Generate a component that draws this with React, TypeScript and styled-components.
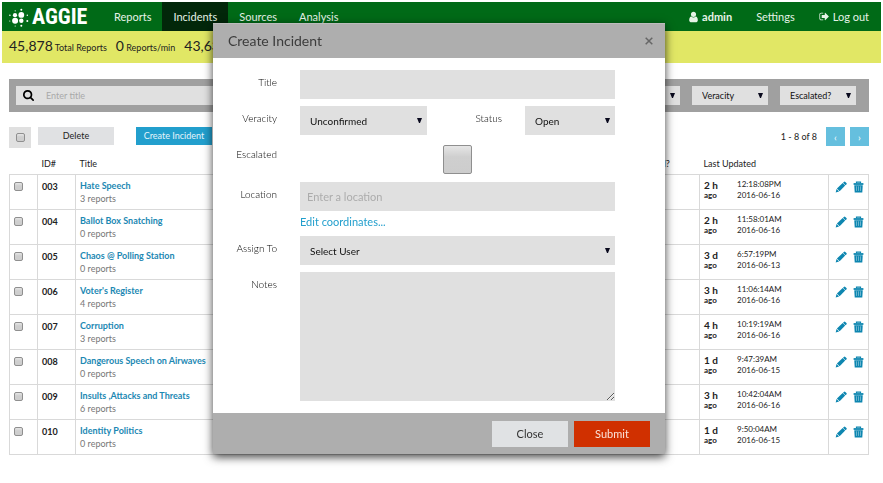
import React from "react";
import styled, { createGlobalStyle } from "styled-components";

const GlobalStyle = createGlobalStyle`
  *, *::before, *::after { box-sizing: border-box; }
  body {
    margin: 0;
    background: #fff;
    color: #222;
    font: 400 10px/12px Lato, "Open Sans", sans-serif;
  }
  button, input, select, textarea { font: inherit; color: inherit; border: 0; border-radius: 0; margin: 0; }
  a { text-decoration: none; }
`;

const Page = styled.div`
  padding: 2px 2px 0;
`;

/* ---------- navigation ---------- */

const NavBar = styled.nav`
  display: flex;
  height: 29px;
  padding: 0 12px 0 7px;
  background: #006a17;
`;

const Brand = styled.a`
  display: flex;
  align-items: center;
  gap: 3px;
  width: 94px;
  color: #fff;
`;

const BrandName = styled.span`
  font: 700 22px/29px "Liberation Sans Narrow", "Roboto Condensed", "Open Sans Condensed", sans-serif;
`;

const NavLink = styled.a<{ $active?: boolean }>`
  display: flex;
  align-items: center;
  gap: 4px;
  padding: 0 11px;
  font-size: 11px;
  color: #e6f3e7;
  background: ${(p) => (p.$active ? "#02270a" : "transparent")};
`;

const NavEnd = styled.div`
  display: flex;
  gap: 2px;
  margin-left: auto;
  margin-right: -11px;
`;

const StatsBar = styled.div`
  display: flex;
  align-items: center;
  gap: 9px;
  height: 32px;
  padding: 0 7px;
  background: #e1e765;
  white-space: nowrap;
`;

const Stat = styled.span`
  font-size: 9px;
`;

const StatValue = styled.span`
  font-size: 14px;
`;

/* ---------- incident list ---------- */

const Content = styled.main`
  padding: 16px 12px 0 7px;
`;

const FilterBar = styled.form`
  display: flex;
  align-items: center;
  gap: 12px;
  height: 33px;
  padding: 0 13px 0 7px;
  background: #a0a0a0;
`;

const SearchBox = styled.label`
  display: flex;
  align-items: center;
  flex: 1;
  gap: 12px;
  height: 19px;
  padding-left: 7px;
  background: #e0e0e0;
`;

const SearchInput = styled.input`
  flex: 1;
  min-width: 0;
  padding: 0;
  background: transparent;
  font-size: 9px;
  &::placeholder { color: #a9a9a9; }
`;

const SelectBox = styled.span<{ $width?: number; $tall?: boolean }>`
  display: grid;
  align-items: center;
  flex: ${(p) => (p.$width ? "none" : "1")};
  width: ${(p) => (p.$width ? `${p.$width}px` : "auto")};
  height: ${(p) => (p.$tall ? 29 : 19)}px;
  background: #e0e0e0;
  font-size: ${(p) => (p.$tall ? 10 : 9)}px;
  & > * { grid-area: 1 / 1; }
  & > svg { justify-self: end; margin-right: 5px; pointer-events: none; }
`;

const SelectControl = styled.select`
  appearance: none;
  width: 100%;
  height: 100%;
  padding: 0 16px 0 10px;
  background: transparent;
  color: #111;
`;

const Toolbar = styled.div`
  display: flex;
  align-items: flex-start;
  height: 27px;
  margin-top: 15px;
`;

const CheckAll = styled.label`
  display: grid;
  place-items: center;
  width: 22px;
  height: 21px;
  margin-right: 7px;
  background: #e0e0e0;
`;

const Checkbox = styled.input<{ $large?: boolean }>`
  appearance: none;
  display: block;
  width: ${(p) => (p.$large ? 29 : 9)}px;
  height: ${(p) => (p.$large ? 29 : 9)}px;
  border: 1px solid #8f8f8f;
  border-radius: 2px;
  background: linear-gradient(#e6e6e6, #cfcfcf 40%, #cdcdcd);
`;

const ToolButton = styled.button<{ $primary?: boolean }>`
  width: 76px;
  height: 18px;
  padding: 0;
  margin-right: 22px;
  font-size: 9px;
  background: ${(p) => (p.$primary ? "#229fcd" : "#e0e1e3")};
  color: ${(p) => (p.$primary ? "#e6f5fb" : "#222")};
`;

const Pager = styled.div`
  display: flex;
  align-items: center;
  gap: 5px;
  margin-left: auto;
`;

const PageRange = styled.span`
  margin-right: 4px;
  font-size: 9px;
`;

const PageButton = styled.button`
  width: 19px;
  height: 19px;
  padding: 0;
  background: #65bfde;
  color: #fff;
`;

const Table = styled.table`
  width: 100%;
  border-collapse: collapse;
  table-layout: fixed;
`;

const HeadCell = styled.th<{ $width?: number }>`
  width: ${(p) => (p.$width ? `${p.$width}px` : "auto")};
  height: 20px;
  padding: 0 4px;
  font-weight: 400;
  font-size: 9px;
  text-align: left;
`;

const Row = styled.tr`
  height: 35px;
  border: 1px solid #d9d9d9;
`;

const Cell = styled.td<{ $ruled?: boolean }>`
  padding: 5px 4px 0;
  vertical-align: top;
  border-left: ${(p) => (p.$ruled ? "1px solid #d9d9d9" : "0")};
`;

const CheckCell = styled(Cell)`
  padding-top: 7px;
`;

const UpdatedCell = styled(Cell)`
  padding-top: 4px;
`;

const IdText = styled.strong`
  font-size: 9px;
`;

const TitleLink = styled.a`
  display: block;
  font-size: 9px;
  font-weight: 700;
  color: #1c88b3;
`;

const ReportCount = styled.span`
  font-size: 9px;
  color: #777;
`;

const Updated = styled.div`
  display: grid;
  grid-template-columns: 33px 1fr;
`;

const Age = styled.strong`
  font-size: 10px;
  line-height: 12px;
`;

const AgeSuffix = styled.span`
  display: block;
  font-size: 8px;
  line-height: 9px;
`;

const Stamp = styled.span`
  font-size: 8px;
  line-height: 11px;
`;

const Actions = styled.div`
  display: flex;
  gap: 6px;
  padding: 1px 2px;
`;

const IconButton = styled.button`
  display: grid;
  flex: none;
  padding: 0;
  background: none;
  color: #0d86b0;
`;

/* ---------- dialog ---------- */

const Overlay = styled.div`
  position: fixed;
  inset: 0;
  display: flex;
  justify-content: center;
  align-items: flex-start;
  padding: 23px 5px 0 0;
`;

const Dialog = styled.section`
  width: 452px;
  background: #fff;
  box-shadow: 0 3px 9px rgba(0, 0, 0, 0.75);
`;

const DialogHeader = styled.header`
  display: flex;
  align-items: center;
  justify-content: space-between;
  height: 35px;
  padding: 0 12px 0 15px;
  border-top: 1px solid #bcbcbc;
  background: #aeaeae;
`;

const DialogTitle = styled.h2`
  margin: 0;
  font-size: 14px;
  font-weight: 400;
  line-height: 20px;
  color: #3c3c3c;
`;

const CloseIcon = styled.button`
  display: grid;
  padding: 0;
  background: none;
  color: #666;
`;

const DialogBody = styled.div`
  display: grid;
  gap: 7px;
  padding: 12px 50px 12px 15px;
`;

const Field = styled.div`
  display: flex;
  align-items: flex-start;
`;

const FieldLabel = styled.label<{ $inline?: boolean }>`
  flex: none;
  width: ${(p) => (p.$inline ? 75 : 49)}px;
  margin-right: 23px;
  font-size: 10px;
  font-weight: 300;
  line-height: 24px;
  text-align: right;
  color: #000;
`;

const FieldControl = styled.div<{ $centered?: boolean }>`
  display: flex;
  flex: 1;
  flex-direction: column;
  align-items: ${(p) => (p.$centered ? "center" : "stretch")};
  padding: ${(p) => (p.$centered ? "3px 0 1px" : "0")};
`;

const TextInput = styled.input`
  height: 29px;
  padding: 0 7px;
  background: #e0e0e0;
  font-size: 11px;
  &::placeholder { color: #acacac; }
`;

const CoordinatesLink = styled.a`
  align-self: flex-start;
  margin-top: 3px;
  font-size: 11px;
  line-height: 15px;
  color: #229fcd;
`;

const Notes = styled.textarea`
  display: block;
  height: 129px;
  padding: 7px;
  background: #e0e0e0;
  font-size: 11px;
  resize: vertical;
`;

const DialogFooter = styled.footer`
  display: flex;
  justify-content: flex-end;
  gap: 6px;
  padding: 8px 15px 7px;
  background: #aeaeae;
`;

const DialogButton = styled.button<{ $submit?: boolean }>`
  width: 76px;
  height: 26px;
  padding: 0;
  font-size: 11px;
  background: ${(p) => (p.$submit ? "#d03000" : "#e0e2e4")};
  color: ${(p) => (p.$submit ? "#fbe3da" : "#333")};
`;

/* ---------- icons ---------- */

const LogoMark = () => (
  <svg width="20" height="20" viewBox="0 -1 20 20" fill="currentColor" aria-hidden="true">
    <circle cx="6" cy="7.2" r="2.1" />
    <circle cx="12.3" cy="6.9" r="2.9" />
    <circle cx="6.1" cy="12.8" r="3" />
    <circle cx="12.3" cy="12.8" r="2.2" />
    <circle cx="12.3" cy="1.8" r="1" />
    <circle cx="6.2" cy="2.8" r=".6" />
    <circle cx=".9" cy="7.2" r=".8" />
    <circle cx=".8" cy="13" r=".6" />
    <circle cx="18.3" cy="7.2" r=".7" />
    <circle cx="18.3" cy="13" r="1" />
    <circle cx="12.3" cy="17.8" r="1" />
    <circle cx="6.2" cy="18" r=".6" />
  </svg>
);

const UserIcon = () => (
  <svg width="9" height="12" viewBox="0 0 1280 1792" fill="currentColor" aria-hidden="true">
    <path d="M1280 1399q0 109-62.5 187t-150.5 78h-854q-88 0-150.5-78t-62.5-187q0-85 8.5-160.5t31.5-152 58.5-131 94-89 134.5-34.5q131 128 313 128t313-128q76 0 134.5 34.5t94 89 58.5 131 31.5 152 8.5 160.5zm-256-887q0 159-112.5 271.5t-271.5 112.5-271.5-112.5-112.5-271.5 112.5-271.5 271.5-112.5 271.5 112.5 112.5 271.5z" />
  </svg>
);

const SignOutIcon = () => (
  <svg width="10" height="11" viewBox="0 0 1664 1792" fill="currentColor" aria-hidden="true">
    <path d="M704 1440q0 4 1 20t.5 26.5-3 23.5-10 19.5-20.5 6.5h-320q-119 0-203.5-84.5t-84.5-203.5v-704q0-119 84.5-203.5t203.5-84.5h320q13 0 22.5 9.5t9.5 22.5q0 4 1 20t.5 26.5-3 23.5-10 19.5-20.5 6.5h-320q-66 0-113 47t-47 113v704q0 66 47 113t113 47h312l11.5 1 11.5 3 8 5.5 7 9 2 13.5zm928-544q0 26-19 45l-544 544q-19 19-45 19t-45-19-19-45v-288h-448q-26 0-45-19t-19-45v-384q0-26 19-45t45-19h448v-288q0-26 19-45t45-19 45 19l544 544q19 19 19 45z" />
  </svg>
);

const SearchIcon = () => (
  <svg width="11" height="11" viewBox="64 128 1664 1664" fill="#000" aria-hidden="true">
    <path d="M1216 832q0-185-131.5-316.5t-316.5-131.5-316.5 131.5-131.5 316.5 131.5 316.5 316.5 131.5 316.5-131.5 131.5-316.5zm512 832q0 52-38 90t-90 38q-54 0-90-38l-343-342q-179 124-399 124-143 0-273.5-55.5t-225-150-150-225-55.5-273.5 55.5-273.5 150-225 225-150 273.5-55.5 273.5 55.5 225 150 150 225 55.5 273.5q0 220-124 399l343 343q37 37 37 90z" />
  </svg>
);

const PencilIcon = () => (
  <svg width="12" height="12" viewBox="0 0 12 12" fill="currentColor" aria-hidden="true">
    <path d="M8.9.9a1 1 0 0 1 1.4 0l1.1 1.1a1 1 0 0 1 0 1.4l-.9.9-2.5-2.5z" />
    <path d="M7.7 2.1l2.5 2.5-5.6 5.7-2.7-2.7z" />
    <path d="M1.5 8l2.6 2.6-3.4.8z" />
  </svg>
);

const TrashIcon = () => (
  <svg width="11" height="12" viewBox="0 0 11 12" aria-hidden="true">
    <path d="M3.5 2.3V1.1h4v1.2" fill="none" stroke="currentColor" strokeWidth="1.2" />
    <path d="M.6 2.1h9.8v1.8H.6z" fill="currentColor" />
    <path d="M1.3 4.2h8.4l-.4 7.2H1.7z" fill="currentColor" />
    <path d="M3.5 5.3v4.6M5.5 5.3v4.6M7.5 5.3v4.6" stroke="#c4e3ee" strokeWidth=".5" />
  </svg>
);

const ArrowIcon = () => (
  <svg width="5" height="5" viewBox="0 0 5 5" fill="#0a0a1e" aria-hidden="true">
    <path d="M0 0h5L3 5H2z" />
  </svg>
);

const CrossIcon = () => (
  <svg width="8" height="8" viewBox="0 0 8 8" aria-hidden="true">
    <path d="M.7.7l6.6 6.6M7.3.7L.7 7.3" stroke="currentColor" strokeWidth="1.5" />
  </svg>
);

/* ---------- composition ---------- */

interface SelectProps {
  id?: string;
  label?: string;
  value: string;
  width?: number;
  tall?: boolean;
}

const Select = ({ id, label, value, width, tall }: SelectProps) => (
  <SelectBox $width={width} $tall={tall}>
    <SelectControl id={id} aria-label={label} defaultValue={value}>
      <option>{value}</option>
    </SelectControl>
    <ArrowIcon />
  </SelectBox>
);

const incidents = [
  { id: "003", title: "Hate Speech", reports: 3, age: "2 h", time: "12:18:08PM", date: "2016-06-16" },
  { id: "004", title: "Ballot Box Snatching", reports: 0, age: "2 h", time: "11:58:01AM", date: "2016-06-16" },
  { id: "005", title: "Chaos @ Polling Station", reports: 0, age: "3 d", time: "6:57:19PM", date: "2016-06-13" },
  { id: "006", title: "Voter's Register", reports: 4, age: "3 h", time: "11:06:14AM", date: "2016-06-16" },
  { id: "007", title: "Corruption", reports: 3, age: "4 h", time: "10:19:19AM", date: "2016-06-16" },
  { id: "008", title: "Dangerous Speech on Airwaves", reports: 0, age: "1 d", time: "9:47:39AM", date: "2016-06-15" },
  { id: "009", title: "Insults ,Attacks and Threats", reports: 6, age: "3 h", time: "10:42:04AM", date: "2016-06-16" },
  { id: "010", title: "Identity Politics", reports: 0, age: "1 d", time: "9:50:04AM", date: "2016-06-15" },
];

const CreateIncidentDialog = () => (
  <Overlay>
    <Dialog role="dialog" aria-labelledby="dialog-title">
      <DialogHeader>
        <DialogTitle id="dialog-title">Create Incident</DialogTitle>
        <CloseIcon type="button" aria-label="Dismiss"><CrossIcon /></CloseIcon>
      </DialogHeader>
      <DialogBody>
        <Field>
          <FieldLabel htmlFor="title">Title</FieldLabel>
          <FieldControl><TextInput id="title" type="text" /></FieldControl>
        </Field>
        <Field>
          <FieldLabel htmlFor="veracity">Veracity</FieldLabel>
          <Select id="veracity" value="Unconfirmed" tall />
          <FieldLabel htmlFor="status" $inline>Status</FieldLabel>
          <Select id="status" value="Open" width={90} tall />
        </Field>
        <Field>
          <FieldLabel htmlFor="escalated">Escalated</FieldLabel>
          <FieldControl $centered><Checkbox id="escalated" type="checkbox" $large /></FieldControl>
        </Field>
        <Field>
          <FieldLabel htmlFor="location">Location</FieldLabel>
          <FieldControl>
            <TextInput id="location" type="text" placeholder="Enter a location" />
            <CoordinatesLink href="#coordinates">Edit coordinates...</CoordinatesLink>
          </FieldControl>
        </Field>
        <Field>
          <FieldLabel htmlFor="assign">Assign To</FieldLabel>
          <Select id="assign" value="Select User" tall />
        </Field>
        <Field>
          <FieldLabel htmlFor="notes">Notes</FieldLabel>
          <FieldControl><Notes id="notes" /></FieldControl>
        </Field>
      </DialogBody>
      <DialogFooter>
        <DialogButton type="button">Close</DialogButton>
        <DialogButton type="submit" $submit>Submit</DialogButton>
      </DialogFooter>
    </Dialog>
  </Overlay>
);

export default function App() {
  return (
    <>
      <GlobalStyle />
      <Page>
        <NavBar>
          <Brand href="#home"><LogoMark /><BrandName>AGGIE</BrandName></Brand>
          <NavLink href="#reports">Reports</NavLink>
          <NavLink href="#incidents" $active>Incidents</NavLink>
          <NavLink href="#sources">Sources</NavLink>
          <NavLink href="#analysis">Analysis</NavLink>
          <NavEnd>
            <NavLink href="#profile"><UserIcon /><strong>admin</strong></NavLink>
            <NavLink href="#settings">Settings</NavLink>
            <NavLink href="#logout"><SignOutIcon />Log out</NavLink>
          </NavEnd>
        </NavBar>
        <StatsBar>
          <Stat><StatValue>45,878</StatValue> Total Reports</Stat>
          <Stat><StatValue>0</StatValue> Reports/min</Stat>
          <Stat><StatValue>43,63</StatValue></Stat>
        </StatsBar>
        <Content>
          <FilterBar>
            <SearchBox>
              <SearchIcon />
              <SearchInput type="text" placeholder="Enter title" aria-label="Title filter" />
            </SearchBox>
            <Select label="Status filter" value="Status" width={76} />
            <Select label="Veracity filter" value="Veracity" width={76} />
            <Select label="Escalated filter" value="Escalated?" width={76} />
          </FilterBar>
          <Toolbar>
            <CheckAll><Checkbox type="checkbox" aria-label="Select all" /></CheckAll>
            <ToolButton type="button">Delete</ToolButton>
            <ToolButton type="button" $primary>Create Incident</ToolButton>
            <Pager>
              <PageRange>1 - 8 of 8</PageRange>
              <PageButton type="button" aria-label="Previous page">‹</PageButton>
              <PageButton type="button" aria-label="Next page">›</PageButton>
            </Pager>
          </Toolbar>
          <Table>
            <thead>
              <tr>
                <HeadCell $width={28} />
                <HeadCell $width={38}>ID#</HeadCell>
                <HeadCell>Title</HeadCell>
                <HeadCell $width={75}>Escalated?</HeadCell>
                <HeadCell $width={129}>Last Updated</HeadCell>
                <HeadCell $width={40} />
              </tr>
            </thead>
            <tbody>
              {incidents.map((item) => (
                <Row key={item.id}>
                  <CheckCell><Checkbox type="checkbox" aria-label={`Select ${item.id}`} /></CheckCell>
                  <Cell $ruled><IdText>{item.id}</IdText></Cell>
                  <Cell $ruled>
                    <TitleLink href={`#${item.id}`}>{item.title}</TitleLink>
                    <ReportCount>{item.reports} reports</ReportCount>
                  </Cell>
                  <Cell />
                  <UpdatedCell $ruled>
                    <Updated>
                      <Age>{item.age}<AgeSuffix>ago</AgeSuffix></Age>
                      <Stamp>{item.time}<br />{item.date}</Stamp>
                    </Updated>
                  </UpdatedCell>
                  <Cell $ruled>
                    <Actions>
                      <IconButton type="button" aria-label={`Edit ${item.id}`}><PencilIcon /></IconButton>
                      <IconButton type="button" aria-label={`Remove ${item.id}`}><TrashIcon /></IconButton>
                    </Actions>
                  </Cell>
                </Row>
              ))}
            </tbody>
          </Table>
        </Content>
      </Page>
      <CreateIncidentDialog />
    </>
  );
}
